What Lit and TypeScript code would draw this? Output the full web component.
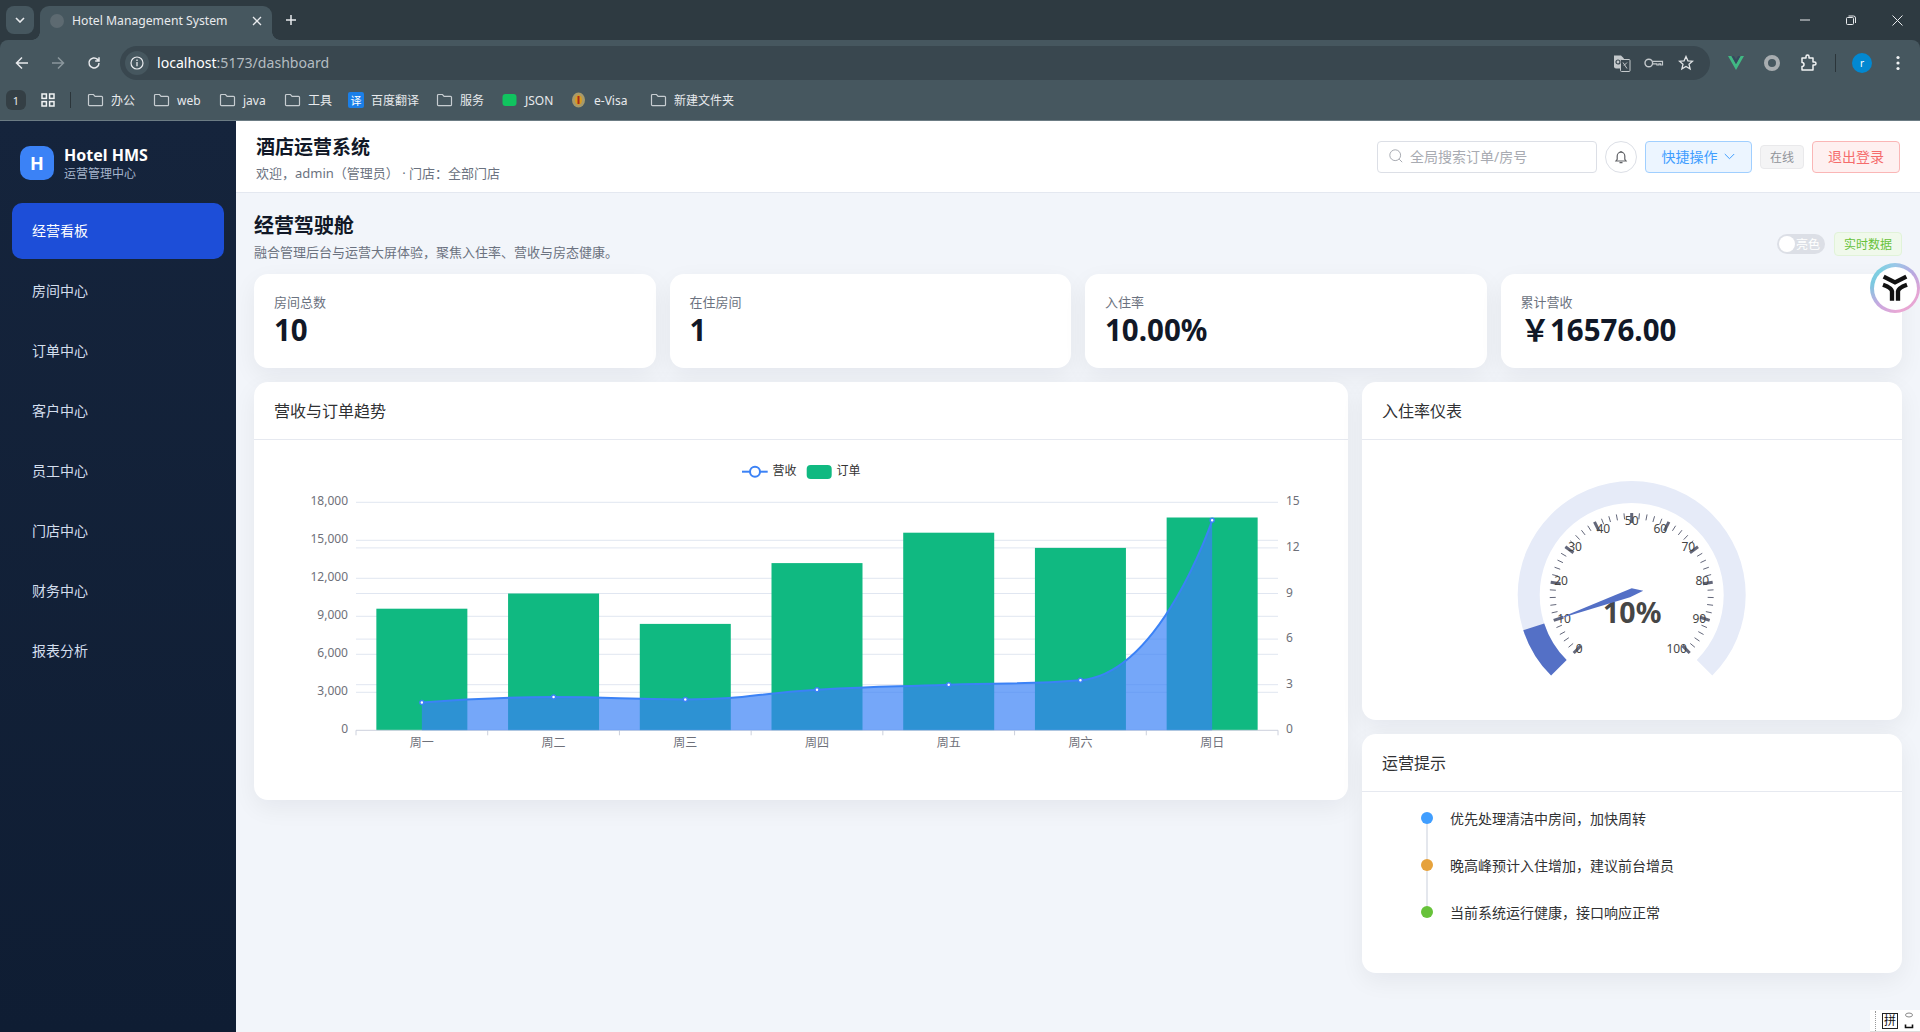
import { LitElement, html, css, svg, unsafeCSS } from "lit";
import { customElement } from "lit/decorators.js";

const FONT = unsafeCSS(`"Noto Sans", "Noto Sans CJK SC", sans-serif`);

const folder = svg`<path d="M1.5 3.5a1 1 0 0 1 1-1h4l1.6 1.8h6.4a1 1 0 0 1 1 1v7.4a1 1 0 0 1-1 1h-12a1 1 0 0 1-1-1z" fill="none" stroke="#c7cdd1" stroke-width="1.2"/>`;

const NAV = ["经营看板", "房间中心", "订单中心", "客户中心", "员工中心", "门店中心", "财务中心", "报表分析"];
const STATS = [
  { label: "房间总数", value: "10" },
  { label: "在住房间", value: "1" },
  { label: "入住率", value: "10.00%" },
  { label: "累计营收", value: "￥16576.00" },
];
const BOOKMARKS: { t: string; icon: string; w: number }[] = [
  { t: "办公", icon: "folder", w: 66 },
  { t: "web", icon: "folder", w: 66 },
  { t: "java", icon: "folder", w: 65 },
  { t: "工具", icon: "folder", w: 64 },
  { t: "百度翻译", icon: "baidu", w: 88 },
  { t: "服务", icon: "folder", w: 65 },
  { t: "JSON", icon: "json", w: 69 },
  { t: "e-Visa", icon: "visa", w: 80 },
  { t: "新建文件夹", icon: "folder", w: 100 },
];
const TIPS = [
  { t: "优先处理清洁中房间，加快周转", c: "#409eff" },
  { t: "晚高峰预计入住增加，建议前台增员", c: "#e6a23c" },
  { t: "当前系统运行健康，接口响应正常", c: "#67c23a" },
];
const DAYS = ["周一", "周二", "周三", "周四", "周五", "周六", "周日"];
const ORDERS = [8, 9, 7, 11, 13, 12, 14];
const REVENUE = [2200, 2620, 2440, 3200, 3600, 3950, 16576];
/* Gauge label centres, relative to the gauge centre. */
const GAUGE_LABELS: [number, number, number][] = [
  [0, -52.4, 53.7], [10, -67.7, 23], [20, -70.7, -14.3], [30, -56.7, -48.3], [40, -28.4, -66.3],
  [50, 0, -74.3], [60, 28.6, -66.3], [70, 56.6, -48.3], [80, 70.6, -14.3], [90, 67.6, 23], [100, 45, 53.7],
];

const clamp = (v: number, a: number, b: number) => Math.max(Math.min(a, b), Math.min(v, Math.max(a, b)));

@customElement("trend-chart")
class TrendChart extends LitElement {
  static styles = css`
    :host { display: block; height: 360px; }
    svg { display: block; }
    text { font-family: ${FONT}; font-size: 12px; fill: #6e7079; }
    .legend { fill: #333; }
  `;
  render() {
    const x0 = 102, x1 = 1024, yB = 290.3, yT = 62.3;
    const cw = (x1 - x0) / 7;
    const cx = (i: number) => x0 + cw * (i + 0.5);
    const yL = (v: number) => yB - ((yB - yT) * v) / 18000;
    const yR = (v: number) => yB - ((yB - yT) * v) / 15;
    const pts = REVENUE.map((v, i) => [cx(i), yL(v)]);
    const ctrl = (i: number) => {
      if (i === 0 || i === pts.length - 1) return { a: pts[i], b: pts[i] };
      const [px, py] = pts[i - 1], [x, y] = pts[i], [nx, ny] = pts[i + 1];
      const lp = Math.hypot(x - px, y - py), ln = Math.hypot(nx - x, ny - y);
      const r = ln / (lp + ln);
      let ax = clamp(x + (nx - px) * 0.5 * r, x, nx), ay = clamp(y + (ny - py) * 0.5 * r, y, ny);
      let bx = clamp(x - ((ax - x) * lp) / ln, px, x), by = clamp(y - ((ay - y) * lp) / ln, py, y);
      ax = x + ((x - bx) * ln) / lp;
      ay = y + ((y - by) * ln) / lp;
      return { a: [bx, by], b: [ax, ay] };
    };
    let d = `M${pts[0][0]} ${pts[0][1]}`;
    for (let i = 1; i < pts.length; i++) {
      const c1 = ctrl(i - 1).b, c2 = ctrl(i).a;
      d += ` C${c1[0]} ${c1[1]} ${c2[0]} ${c2[1]} ${pts[i][0]} ${pts[i][1]}`;
    }
    const area = `${d} L${pts[6][0]} ${yB} L${pts[0][0]} ${yB} Z`;
    return html`<svg width="1094" height="360" viewBox="0 0 1094 360">
      ${[3000, 6000, 9000, 12000, 15000, 18000].map((v) => svg`<line x1=${x0} x2=${x1} y1=${yL(v)} y2=${yL(v)} stroke="#e0e6f1"/>`)}
      ${[3, 6, 9, 12].map((v) => svg`<line x1=${x0} x2=${x1} y1=${yR(v)} y2=${yR(v)} stroke="#e0e6f1"/>`)}
      ${[0, 3000, 6000, 9000, 12000, 15000, 18000].map((v) => svg`<text x="94" y=${yL(v) + 3} text-anchor="end">${v.toLocaleString("en-US")}</text>`)}
      ${[0, 3, 6, 9, 12, 15].map((v) => svg`<text x="1032" y=${yR(v) + 3}>${v}</text>`)}
      ${ORDERS.map((v, i) => svg`<rect x=${cx(i) - 45.5} y=${yR(v)} width="91" height=${yB - yR(v)} fill="#10b981"/>`)}
      <line x1=${x0} x2=${x1} y1=${yB} y2=${yB} stroke="#ccd0dc"/>
      ${[0, 1, 2, 3, 4, 5, 6, 7].map((i) => svg`<line x1=${x0 + cw * i} x2=${x0 + cw * i} y1=${yB} y2=${yB + 5} stroke="#ccd0dc"/>`)}
      ${DAYS.map((t, i) => svg`<text x=${cx(i)} y="307" text-anchor="middle">${t}</text>`)}
      <path d=${area} fill="#3b82f6" fill-opacity="0.7"/>
      <path d=${d} fill="none" stroke="#3b82f6" stroke-width="2"/>
      ${pts.map((p) => svg`<circle cx=${p[0]} cy=${p[1]} r="2" fill="#fff" stroke="#3b82f6" stroke-width="1.5"/>`)}
      <line x1="488" x2="513.7" y1="31.7" y2="31.7" stroke="#3b82f6" stroke-width="2"/>
      <circle cx="501" cy="31.7" r="5" fill="#fff" stroke="#3b82f6" stroke-width="2"/>
      <text class="legend" x="518.5" y="34.5">营收</text>
      <rect x="552.7" y="25" width="25" height="14" rx="4" fill="#10b981"/>
      <text class="legend" x="582.5" y="34.5">订单</text>
    </svg>`;
  }
}

@customElement("gauge-chart")
class GaugeChart extends LitElement {
  static styles = css`
    :host { display: block; height: 280px; }
    svg { display: block; }
    text { font-family: ${FONT}; font-size: 12px; fill: #464646; }
    .big { font-size: 28.5px; font-weight: 700; }
  `;
  render() {
    const cx = 269.7, cy = 155;
    const pol = (deg: number, r: number) => {
      const a = (deg * Math.PI) / 180;
      return [cx + r * Math.cos(a), cy - r * Math.sin(a)];
    };
    const arc = (from: number, to: number, R: number, r: number) => {
      const s = pol(from, R), e = pol(to, R), s2 = pol(to, r), e2 = pol(from, r);
      const large = from - to > 180 ? 1 : 0;
      return `M${s[0]} ${s[1]} A${R} ${R} 0 ${large} 1 ${e[0]} ${e[1]} L${s2[0]} ${s2[1]} A${r} ${r} 0 ${large} 0 ${e2[0]} ${e2[1]} Z`;
    };
    const ang = (pct: number) => 225 - (270 * pct) / 100;
    const ticks: unknown[] = [];
    for (let i = 0; i <= 50; i++) {
      const p = i * 2;
      const major = i % 5 === 0;
      const a = pol(ang(p), 82), b = pol(ang(p), major ? 72 : 76);
      ticks.push(svg`<line x1=${a[0]} y1=${a[1]} x2=${b[0]} y2=${b[1]} stroke="#63677a" stroke-width=${major ? 3 : 1}/>`);
    }
    const tip = pol(198, 80);
    return html`<svg width="540" height="280" viewBox="0 0 540 280">
      <path d=${arc(225, -45, 114, 92)} fill="#e6ebf8"/>
      <path d=${arc(225, 198, 114, 92)} fill="#5470c6"/>
      ${ticks}
      ${GAUGE_LABELS.map(([v, dx, dy]) => svg`<text x=${cx + dx} y=${cy + dy + 4.5} text-anchor="middle">${v}</text>`)}
      <text class="big" x=${cx + 0.5} y=${cy + 27.5} text-anchor="middle">10%</text>
      <polygon points="${tip[0]},${tip[1]} ${cx},${cy - 6.7} ${cx + 11.6},${cy - 4.3} ${cx - 1.7},${cy + 2.3}" fill="#5470c6"/>
    </svg>`;
  }
}

@customElement("app-root")
export class AppRoot extends LitElement {
  static styles = css`
    :host {
      display: flex; flex-direction: column; width: 1920px; height: 1032px; overflow: hidden; position: relative;
      font-family: ${FONT}; color: #303133;
    }
    * { box-sizing: border-box; }
    svg { display: block; flex: none; }
    /* browser chrome */
    .chrome { height: 121px; background: #2e3a41; border-bottom: 1px solid #6c7c84; flex: none; color: #e8eaed; }
    .tabs { height: 40px; display: flex; align-items: flex-end; padding-left: 6px; position: relative; }
    .tabs-btn { width: 28px; height: 28px; margin-bottom: 6px; border-radius: 8px; background: #46575f; display: flex; align-items: center; justify-content: center; }
    .tab { width: 232px; height: 34px; margin-left: 6px; background: #46575f; border-radius: 9px 9px 0 0; display: flex; align-items: center; padding: 0 10px 5px; font-size: 12.2px; position: relative; }
    .tab::before, .tab::after { content: ""; position: absolute; bottom: 0; width: 8px; height: 8px; }
    .tab::before { left: -8px; background: radial-gradient(circle at 0 0, transparent 7.5px, #46575f 8px); }
    .tab::after { right: -8px; background: radial-gradient(circle at 100% 0, transparent 7.5px, #46575f 8px); }
    .tab .fav { width: 14px; height: 14px; border-radius: 50%; background: #5d6a71; margin-right: 8px; }
    .tab .title { flex: 1; white-space: nowrap; }
    .plus { margin: 0 0 6px 13px; height: 28px; display: flex; align-items: center; }
    .win { margin-left: auto; display: flex; align-items: center; height: 40px; align-self: flex-start; }
    .win span { width: 46px; display: flex; justify-content: center; }
    .bar { height: 40px; display: flex; align-items: center; position: relative; background: #46575f; border-radius: 8px 8px 0 0; }
    .navbtn { width: 36px; display: flex; justify-content: center; }
    .nav-icons { display: flex; padding-left: 4px; margin-bottom: -6px; }
    .omni { position: absolute; left: 120px; top: 6px; width: 1590px; height: 34px; background: #39474f; border-radius: 17px; display: flex; align-items: center; padding-left: 5px; }
    .chip { width: 24px; height: 24px; border-radius: 50%; background: #46575f; display: flex; align-items: center; justify-content: center; margin-right: 8px; }
    .url { font-size: 14.1px; color: #fff; white-space: nowrap; padding-bottom: 2px; }
    .url i { font-style: normal; color: #b4bcc1; }
    .omni-r { margin-left: auto; display: flex; padding-right: 8px; align-items: center; }
    .omni-r span { width: 32px; display: flex; justify-content: center; }
    .ext { position: absolute; top: 6px; left: 1724px; height: 34px; width: 196px; display: flex; align-items: center; }
    .ext > * { position: absolute; }
    .avatar { width: 20px; height: 20px; border-radius: 50%; background: #0288d1; color: #fff; font-size: 10px; display: flex; align-items: center; justify-content: center; left: 128px; }
    .bm { height: 40px; display: flex; align-items: center; padding-left: 6px; font-size: 12px; white-space: nowrap; background: #46575f; }
    .bm-count { width: 20px; height: 20px; border-radius: 6px; background: #343f45; display: flex; align-items: center; justify-content: center; font-size: 11px; }
    .bm-grid { margin-left: 15px; }
    .bm-sep { width: 1px; height: 16px; background: #2b353a; margin: 0 9px 0 15px; }
    .bm-item { display: flex; align-items: center; gap: 7px; padding-left: 7px; }
    .bm-item svg { width: 17px; height: 16px; }
    .baidu { width: 16px; height: 16px; background: #1a7fe8; border-radius: 2px; color: #fff; font-size: 11px; display: flex; align-items: center; justify-content: center; }

    /* app */
    .app { flex: 1; display: flex; min-height: 0; }
    .side { width: 236px; flex: none; background: linear-gradient(180deg, #15243c 0%, #0f1d33 100%); padding: 25px 12px 0; }
    .brand { display: flex; align-items: center; gap: 10px; padding-left: 8px; height: 34px; margin-bottom: 23px; }
    .logo { width: 34px; height: 34px; border-radius: 10px; background: #3b82f6; color: #fff; font-weight: 700; font-size: 18px; display: flex; align-items: center; justify-content: center; }
    .brand b { display: block; font-size: 16px; line-height: 20px; color: #fff; font-weight: 700; }
    .brand small { display: block; font-size: 12px; line-height: 16px; margin-top: 1px; color: #a6b5cc; }
    .nav { display: flex; flex-direction: column; gap: 4px; }
    .nav a { height: 56px; display: flex; align-items: center; padding: 0 0 2px 20px; font-size: 14px; color: #d4dfee; border-radius: 10px; }
    .nav a.on { background: #1d4ed8; color: #fff; }

    .main { flex: 1; min-width: 0; background: #f2f5fa; display: flex; flex-direction: column; }
    .top { height: 72px; flex: none; background: #fff; border-bottom: 1px solid #e4e8f0; display: flex; align-items: center; justify-content: space-between; padding: 0 20px; }
    .top-l { padding-top: 3px; }
    .top h1 { margin: 0; font-size: 19px; line-height: 26px; font-weight: 700; color: #111827; }
    .top p { margin: 3px 0 0; font-size: 13px; line-height: 20px; color: #6b7280; }
    .tools { display: flex; align-items: center; gap: 8px; }
    .search { width: 220px; height: 32px; border: 1px solid #dcdfe6; border-radius: 4px; display: flex; align-items: center; gap: 7px; padding: 0 0 1px 11px; font-size: 14px; color: #a8abb2; }
    .bell { width: 32px; height: 32px; border-radius: 50%; border: 1px solid #dcdfe6; display: flex; align-items: center; justify-content: center; }
    .btn { height: 32px; border: 1px solid; border-radius: 4px; display: flex; align-items: center; justify-content: center; font-size: 14px; padding-bottom: 1px; }
    .quick { width: 107px; background: #ecf5ff; border-color: #a0cfff; color: #409eff; gap: 7px; }
    .logout { width: 88px; background: #fef0f0; border-color: #fab6b6; color: #f56c6c; }
    .tag { height: 24px; border: 1px solid; border-radius: 4px; font-size: 12px; display: flex; align-items: center; padding: 0 9px; }
    .tag.gray { background: #f4f4f5; border-color: #e9e9eb; color: #909399; }
    .tag.green { background: #f0f9eb; border-color: #e1f3d8; color: #67c23a; }

    .content { padding: 18px 18px 0; flex: 1; }
    .head { display: flex; justify-content: space-between; align-items: flex-start; height: 63px; }
    .head h2 { margin: 0; padding-top: 1px; font-size: 20px; line-height: 28px; font-weight: 700; color: #111827; }
    .head p { margin: 2px 0 0; font-size: 13px; line-height: 20px; color: #6b7280; }
    .head-r { display: flex; align-items: center; gap: 9px; padding-top: 21px; }
    .switch { width: 48px; height: 20px; border-radius: 10px; background: #dcdfe6; display: flex; align-items: center; padding-left: 2px; gap: 1px; color: #fff; font-size: 12px; white-space: nowrap; }
    .switch i { width: 16px; height: 16px; border-radius: 50%; background: #fff; flex: none; }

    .stats { display: grid; grid-template-columns: repeat(4, 1fr); gap: 14px; margin: 0 0 14px; }
    .card { background: #fff; border-radius: 14px; box-shadow: 0 8px 24px rgba(15, 23, 42, 0.06); }
    .stat { height: 94px; padding: 19px 20px 0; }
    .stat span { display: block; font-size: 13px; line-height: 18px; color: #6b7280; }
    .stat b { display: block; font-size: 29.5px; line-height: 36px; margin-top: 1px; font-weight: 700; color: #111827; white-space: nowrap; }
    .charts { display: grid; grid-template-columns: 1094px 540px; gap: 14px; align-items: start; }
    .col { display: flex; flex-direction: column; gap: 14px; }
    .card-h { height: 58px; border-bottom: 1px solid #e6e9f0; display: flex; align-items: center; padding: 0 20px 2px; font-size: 16px; color: #303133; }
    .tips { list-style: none; margin: 0; padding: 20px 20px 20px 60px; }
    .tips li { height: 47px; position: relative; padding-left: 28px; font-size: 14px; line-height: 14px; color: #303133; }
    .tips li::before { content: ""; position: absolute; left: 4px; top: 6px; bottom: -6px; width: 2px; background: #e4e7ed; }
    .tips li:last-child::before { display: none; }
    .tips li i { position: absolute; left: -1px; top: 0; width: 12px; height: 12px; border-radius: 50%; }

    .float { position: absolute; left: 1870px; top: 263px; width: 50px; height: 50px; border-radius: 50%; background: conic-gradient(#9ac8e8 0deg, #b8a8e0 50deg, #e4a4d4 100deg, #eaa8d4 170deg, #c8a8e0 225deg, #7cc8e0 280deg, #7fd0e2 320deg, #9ac8e8 360deg); display: flex; align-items: center; justify-content: center; }
    .float div { width: 43px; height: 43px; border-radius: 50%; background: #fff; display: flex; align-items: center; justify-content: center; }
    .ime { position: absolute; right: 0; bottom: 0; width: 50px; height: 22px; background: #fff; border-bottom: 1px solid #ddd; display: flex; align-items: center; padding-left: 5px; gap: 6px; font-size: 12px; color: #111; }
    .ime em { font-style: normal; width: 16px; height: 16px; border: 1px solid #222; display: flex; align-items: center; justify-content: center; line-height: 1; font-size: 12px; }
    .ime u { width: 1px; height: 20px; border-left: 1px dotted #999; }
  `;

  private bmIcon(k: string) {
    if (k === "folder") return html`<svg viewBox="0 0 17 16">${folder}</svg>`;
    if (k === "baidu") return html`<span class="baidu">译</span>`;
    if (k === "json") return html`<svg viewBox="0 0 16 16"><rect x="1" y="2" width="14" height="12" rx="3" fill="#10c45f"/></svg>`;
    return html`<svg viewBox="0 0 16 16"><ellipse cx="8" cy="8" rx="6.5" ry="7.5" fill="#a89a6a"/><ellipse cx="8" cy="8" rx="3.5" ry="5" fill="#d89c20"/><rect x="7" y="4" width="2" height="8" fill="#a8281c"/></svg>`;
  }

  render() {
    return html`
      <div class="chrome">
        <div class="tabs">
          <div class="tabs-btn"><svg width="10" height="6" viewBox="0 0 10 6"><path d="M1 1l4 4 4-4" fill="none" stroke="#e8eaed" stroke-width="1.6"/></svg></div>
          <div class="tab">
            <span class="fav"></span><span class="title">Hotel Management System</span>
            <svg width="10" height="10" viewBox="0 0 10 10"><path d="M1 1l8 8M9 1l-8 8" stroke="#e8eaed" stroke-width="1.3"/></svg>
          </div>
          <div class="plus"><svg width="12" height="12" viewBox="0 0 12 12"><path d="M6 1v10M1 6h10" stroke="#e8eaed" stroke-width="1.5"/></svg></div>
          <div class="win">
            <span><svg width="10" height="10" viewBox="0 0 10 10"><path d="M0 5h10" stroke="#e8eaed"/></svg></span>
            <span><svg width="10" height="10" viewBox="0 0 10 10"><rect x=".5" y="2.5" width="7" height="7" rx="1" fill="none" stroke="#e8eaed"/><path d="M2.5 1h5a2 2 0 0 1 2 2v5" fill="none" stroke="#e8eaed"/></svg></span>
            <span><svg width="11" height="11" viewBox="0 0 11 11"><path d="M.5.5l10 10M10.5.5l-10 10" stroke="#e8eaed"/></svg></span>
          </div>
        </div>
        <div class="bar">
          <div class="nav-icons">
            <span class="navbtn"><svg width="14" height="14" viewBox="0 0 14 14"><path d="M13 7H2M7 1.5L1.5 7 7 12.5" fill="none" stroke="#e8eaed" stroke-width="1.5"/></svg></span>
            <span class="navbtn"><svg width="14" height="14" viewBox="0 0 14 14"><path d="M1 7h11M7 1.5L12.5 7 7 12.5" fill="none" stroke="#8b979d" stroke-width="1.5"/></svg></span>
            <span class="navbtn"><svg width="14" height="14" viewBox="0 0 14 14"><path d="M12 7a5 5 0 1 1-1.5-3.6L12 5M12 1.2V5H8.2" fill="none" stroke="#e8eaed" stroke-width="1.5"/></svg></span>
          </div>
          <div class="omni">
            <span class="chip"><svg width="14" height="14" viewBox="0 0 14 14"><circle cx="7" cy="7" r="6" fill="none" stroke="#e8eaed" stroke-width="1.2"/><path d="M7 6v4.2M7 3.6v1.3" stroke="#e8eaed" stroke-width="1.3"/></svg></span>
            <span class="url">localhost<i>:5173/dashboard</i></span>
            <span class="omni-r">
              <span><svg width="18" height="18" viewBox="0 0 18 18"><path d="M1 1.5h7l3 3v10H3a2 2 0 0 1-2-2z" fill="#c4c9cc"/><rect x="7.5" y="5.5" width="9.5" height="12" rx="1" fill="#39474f" stroke="#c4c9cc"/><path d="M10 8.5l4 6M14 8.5l-3 3" stroke="#c4c9cc"/><circle cx="5" cy="8" r="2" fill="none" stroke="#39474f" stroke-width="1.2"/></svg></span>
              <span><svg width="20" height="12" viewBox="0 0 20 12"><circle cx="4.8" cy="6" r="3.8" fill="none" stroke="#c4c9cc" stroke-width="1.4"/><path d="M8.6 4.4H18.5V8h-2V6.8h-1.6V8h-2V6.8H8.6" fill="none" stroke="#c4c9cc" stroke-width="1.2"/></svg></span>
              <span><svg width="16" height="16" viewBox="0 0 16 16"><path d="M8 1.5l1.9 4.3 4.6.4-3.5 3 1.1 4.6L8 11.4l-4.1 2.4L5 9.2l-3.5-3 4.6-.4z" fill="none" stroke="#e0e3e5" stroke-width="1.3"/></svg></span>
            </span>
          </div>
          <div class="ext">
            <svg style="left:4px" width="16" height="14" viewBox="0 0 16 14"><path d="M0 0h3.5L8 8l4.5-8H16L8 14z" fill="#41b883"/><path d="M3.5 0h2.5L8 3.5 10 0h2.5L8 8z" fill="#35495e"/></svg>
            <svg style="left:40px" width="16" height="16" viewBox="0 0 16 16"><circle cx="8" cy="8" r="6" fill="none" stroke="#a8adb0" stroke-width="4"/></svg>
            <svg style="left:77px" width="16" height="18" viewBox="0 0 16 18"><path d="M1 4h4V2.5a1.5 1.5 0 0 1 3 0V4h4v4h1.5a1.5 1.5 0 0 1 0 3H12v5H1v-3.5a1.5 1.5 0 0 0 0-4z" fill="none" stroke="#f1f3f4" stroke-width="1.5" stroke-linejoin="round"/></svg>
            <span style="left:111px;width:1px;height:18px;background:#2b353a"></span>
            <span class="avatar">r</span>
            <svg style="left:172px" width="4" height="16" viewBox="0 0 4 16"><circle cx="2" cy="2.5" r="1.6" fill="#f1f3f4"/><circle cx="2" cy="8" r="1.6" fill="#f1f3f4"/><circle cx="2" cy="13.5" r="1.6" fill="#f1f3f4"/></svg>
          </div>
        </div>
        <div class="bm">
          <span class="bm-count">1</span>
          <svg class="bm-grid" width="14" height="14" viewBox="0 0 14 14"><g fill="none" stroke="#f1f3f4" stroke-width="1.5"><rect x="1" y="1" width="4.4" height="4.4"/><rect x="8.6" y="1" width="4.4" height="4.4"/><rect x="1" y="8.6" width="4.4" height="4.4"/><rect x="8.6" y="8.6" width="4.4" height="4.4"/></g></svg>
          <span class="bm-sep"></span>
          ${BOOKMARKS.map(
            (b) => html`<span class="bm-item" style="width:${b.w}px">${this.bmIcon(b.icon)}<span>${b.t}</span></span>`
          )}
        </div>
      </div>

      <div class="app">
        <aside class="side">
          <div class="brand">
            <div class="logo">H</div>
            <div><b>Hotel HMS</b><small>运营管理中心</small></div>
          </div>
          <nav class="nav">
            ${NAV.map((n, i) => html`<a class=${i === 0 ? "on" : ""}>${n}</a>`)}
          </nav>
        </aside>
        <div class="main">
          <header class="top">
            <div class="top-l">
              <h1>酒店运营系统</h1>
              <p>欢迎，admin（管理员） · 门店：全部门店</p>
            </div>
            <div class="tools">
              <div class="search">
                <svg width="14" height="14" viewBox="0 0 14 14"><circle cx="6.2" cy="6.2" r="5.4" fill="none" stroke="#a8abb2"/><path d="M10.2 10.2l3 3" stroke="#a8abb2"/></svg>
                全局搜索订单/房号
              </div>
              <div class="bell"><svg width="14" height="14" viewBox="0 0 14 14"><path d="M2 11h10l-1.2-1.6V6a3.8 3.8 0 0 0-7.6 0v3.4z" fill="none" stroke="#606266" stroke-width="1.2"/><path d="M5.5 12.6h3M7 1v1.2" stroke="#606266" stroke-width="1.3"/></svg></div>
              <div class="btn quick">快捷操作<svg width="11" height="7" viewBox="0 0 11 7"><path d="M.8 1l4.7 4.7L10.2 1" fill="none" stroke="#409eff"/></svg></div>
              <span class="tag gray">在线</span>
              <div class="btn logout">退出登录</div>
            </div>
          </header>
          <div class="content">
            <div class="head">
              <div>
                <h2>经营驾驶舱</h2>
                <p>融合管理后台与运营大屏体验，聚焦入住率、营收与房态健康。</p>
              </div>
              <div class="head-r">
                <div class="switch"><i></i>亮色</div>
                <span class="tag green">实时数据</span>
              </div>
            </div>
            <div class="stats">
              ${STATS.map((s) => html`<div class="card stat"><span>${s.label}</span><b>${s.value}</b></div>`)}
            </div>
            <div class="charts">
              <div class="card">
                <div class="card-h">营收与订单趋势</div>
                <trend-chart></trend-chart>
              </div>
              <div class="col">
                <div class="card">
                  <div class="card-h">入住率仪表</div>
                  <gauge-chart></gauge-chart>
                </div>
                <div class="card">
                  <div class="card-h">运营提示</div>
                  <ul class="tips">
                    ${TIPS.map((t) => html`<li><i style="background:${t.c}"></i>${t.t}</li>`)}
                  </ul>
                </div>
              </div>
            </div>
          </div>
        </div>
      </div>

      <div class="float"><div>
        <svg width="28" height="28" viewBox="60 60 84 84" fill="none" stroke="#111" stroke-width="13">
          <path d="M68 68l34 17 34-17"/>
          <path d="M66 92c14 5 26 10 27 20v28"/>
          <path d="M138 92c-14 5-26 10-27 20v28"/>
        </svg>
      </div></div>
      <div class="ime">
        <u></u><em>拼</em>
        <svg width="10" height="18" viewBox="0 0 10 18"><ellipse cx="5" cy="3" rx="3.5" ry="2" fill="none" stroke="#888"/><path d="M1.5 12.5v3h7v-3" fill="none" stroke="#111" stroke-width="1.6"/></svg>
      </div>
    `;
  }
}
